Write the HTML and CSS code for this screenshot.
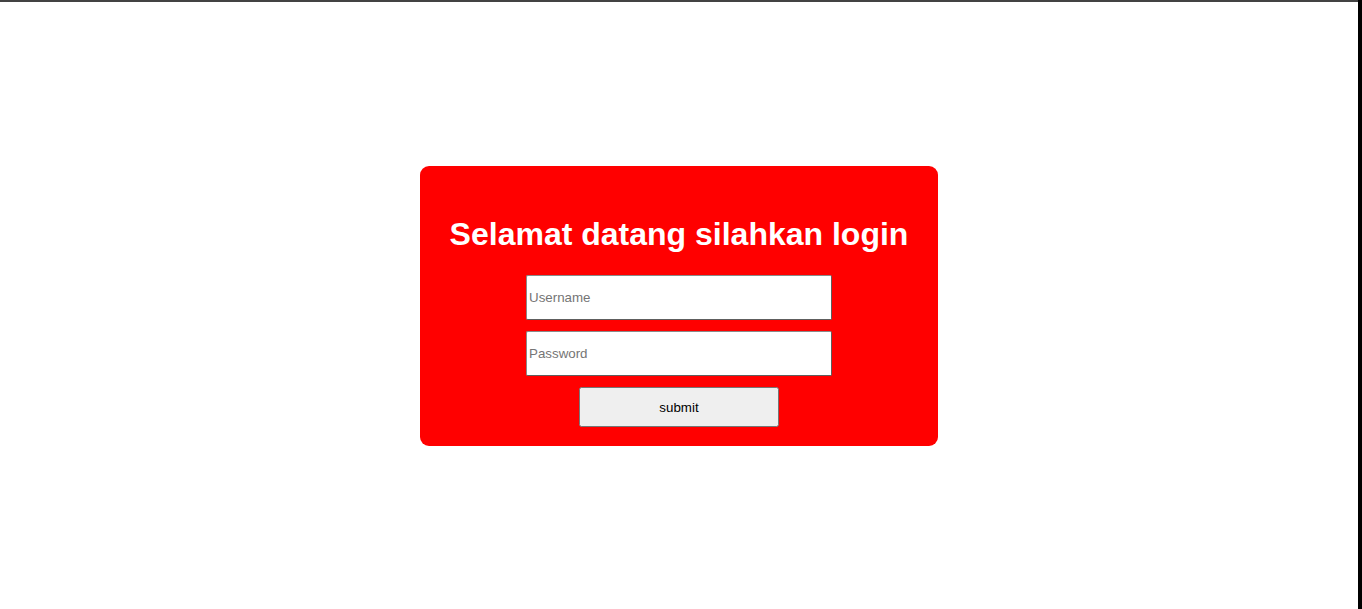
FILE: index.html
```html
<!DOCTYPE html>
<html lang="id">
<head>
<meta charset="utf-8">
<title>Login</title>
<link rel="stylesheet" href="styles.css">
</head>
<body>
<div class="page">
  <main class="stage">
    <div class="card">
      <h1 class="title">Selamat datang silahkan login</h1>
      <form class="form" onsubmit="return false;">
        <input class="field" type="text" placeholder="Username">
        <input class="field" type="password" placeholder="Password">
        <button class="submit" type="submit">submit</button>
      </form>
    </div>
  </main>
  <div class="edge"></div>
</div>
</body>
</html>
```

FILE: styles.css
```css
html, body {
  margin: 0;
  padding: 0;
  height: 100%;
  background: #ffffff;
  font-family: "Liberation Sans", Arial, sans-serif;
}

.page {
  display: flex;
  height: 100vh;
}

.stage {
  flex: 1;
  box-sizing: border-box;
  padding-top: 1px;
  border-top: 2px solid #434343;
  display: flex;
  align-items: center;
  justify-content: center;
}

.edge {
  width: 4px;
  background: #000000;
}

.card {
  width: 518px;
  box-sizing: border-box;
  padding: 50px 0 19px;
  background: #ff0000;
  border-radius: 9px;
  display: flex;
  flex-direction: column;
  align-items: center;
}

.title {
  margin: 0 0 22px;
  height: 37px;
  color: #ffffff;
  font-size: 32px;
  font-weight: bold;
  line-height: 37px;
  font-family: "Liberation Sans", Arial, sans-serif;
}

.form {
  display: flex;
  flex-direction: column;
  align-items: center;
  gap: 11px;
}

.field {
  width: 306px;
  height: 45px;
  box-sizing: border-box;
  padding: 1px 2px;
  border: 1px solid;
  border-color: #8a8a8a #5e5e5e #5e5e5e #8a8a8a;
  border-radius: 2px;
  background: #ffffff;
  font-family: "Liberation Sans", Arial, sans-serif;
  font-size: 13.333px;
  margin: 0;
}

.field::placeholder {
  color: #757575;
}

.submit {
  width: 200px;
  height: 40px;
  box-sizing: border-box;
  font-family: "Liberation Sans", Arial, sans-serif;
  font-size: 13.333px;
  color: #000000;
  margin: 0;
}
```
